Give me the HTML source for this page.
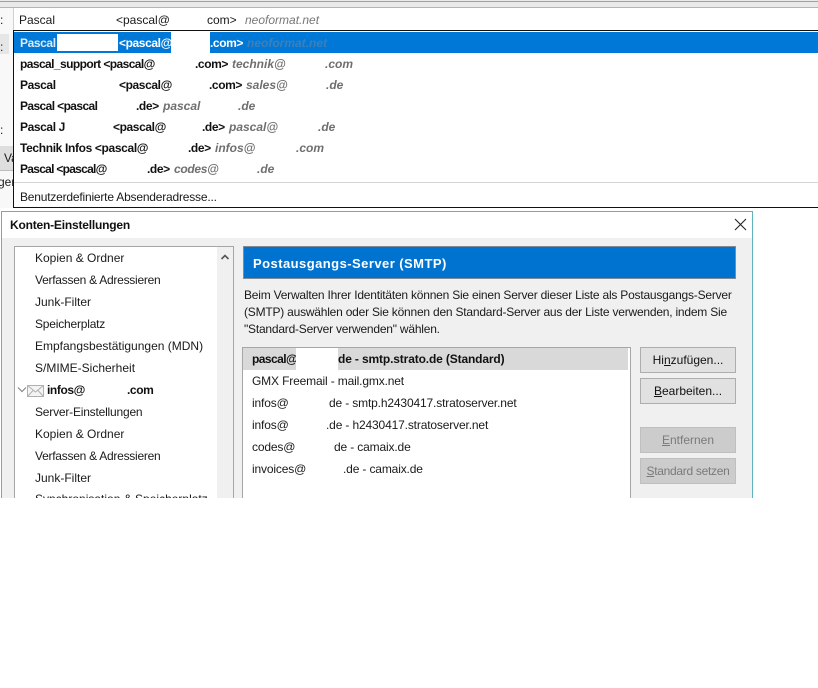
<!DOCTYPE html>
<html>
<head>
<meta charset="utf-8">
<style>
html,body{margin:0;padding:0;background:#fff;}
#p{position:relative;width:818px;height:688px;overflow:hidden;background:#fff;font-family:"Liberation Sans",sans-serif;font-size:12px;color:#1a1a1a;}
#p div,#p span{position:absolute;white-space:nowrap;}
.t{line-height:16px;height:16px;}
.b{font-weight:bold;color:#111;letter-spacing:-.4px;}
.g{font-style:italic;font-weight:bold;color:#6f6f6f;}
.w{color:#fff;font-weight:bold;letter-spacing:-.4px;}
.l{letter-spacing:-.15px;}
.btn{background:#e1e1e1;border:1px solid #adadad;box-sizing:border-box;text-align:center;line-height:24px;color:#111;}
.dis{background:#cccccc;border:1px solid #bfbfbf;color:#7a7a7a;}
u{text-decoration:underline;}
</style>
</head>
<body>
<div id="p">
<!-- top strip -->
<div style="left:0;top:0;width:818px;height:8px;background:#e9e9e9;"></div>
<div style="left:0;top:1px;width:818px;height:1px;background:#a0a0a0;"></div>
<div style="left:0;top:7px;width:818px;height:1px;background:#b4b4b4;"></div>
<div style="left:0;top:8px;width:13px;height:200px;background:#f8f8f8;"></div>
<div style="left:0;top:34px;width:9px;height:20px;background:#e6e6e6;"></div>
<div style="left:0;top:146px;width:13px;height:24px;background:#dedede;"></div>
<div style="left:0;top:170px;width:13px;height:1px;background:#bdbdbd;"></div>
<span class="t" style="left:0;top:12px;">:</span>
<span class="t" style="left:0;top:39px;">:</span>
<span class="t" style="left:0;top:122px;">:</span>
<span class="t" style="left:4px;top:150px;">Va</span>
<span class="t" style="left:-2px;top:174px;">ger</span>
<!-- input -->
<div style="left:13px;top:8px;width:805px;height:22px;background:#fff;"></div>
<div style="left:13px;top:8px;width:1px;height:22px;background:#d0d0d0;"></div>
<span class="t" style="left:19px;top:12px;">Pascal</span>
<span class="t" style="left:116px;top:12px;">&lt;pascal@</span>
<span class="t" style="left:207px;top:12px;">com&gt;</span>
<span class="t" style="left:245px;top:12px;font-style:italic;color:#777;">neoformat.net</span>
<!-- dropdown -->
<div style="left:13px;top:30px;width:805px;height:178px;box-sizing:border-box;border:1px solid #111;border-right:0;background:#fff;"></div>
<div style="left:14px;top:32px;width:804px;height:21px;background:#0078d7;"></div>
<span class="t w" style="left:20px;top:35px;color:#dce9f6;">Pascal</span>
<div style="left:57px;top:34px;width:61px;height:17px;background:#fff;"></div>
<span class="t w" style="left:119px;top:35px;">&lt;pascal@</span>
<div style="left:171px;top:32px;width:39px;height:21px;background:#fff;"></div>
<span class="t w" style="left:210px;top:35px;">.com&gt;</span>
<span class="t g" style="left:247px;top:35px;color:#3f7fb8;">neoformat.net</span>

<span class="t b" style="left:20px;top:56px;letter-spacing:-.58px;">pascal_support &lt;pascal@</span>
<span class="t b" style="left:195px;top:56px;">.com&gt;</span>
<span class="t g" style="left:232px;top:56px;">technik@</span>
<span class="t g" style="left:325px;top:56px;">.com</span>

<span class="t b" style="left:20px;top:77px;">Pascal</span>
<span class="t b" style="left:119px;top:77px;">&lt;pascal@</span>
<span class="t b" style="left:209px;top:77px;">.com&gt;</span>
<span class="t g" style="left:246px;top:77px;">sales@</span>
<span class="t g" style="left:326px;top:77px;">.de</span>

<span class="t b" style="left:20px;top:98px;letter-spacing:-.6px;">Pascal &lt;pascal</span>
<span class="t b" style="left:136px;top:98px;">.de&gt;</span>
<span class="t g" style="left:163px;top:98px;">pascal</span>
<span class="t g" style="left:238px;top:98px;">.de</span>

<span class="t b" style="left:20px;top:119px;">Pascal J</span>
<span class="t b" style="left:113px;top:119px;">&lt;pascal@</span>
<span class="t b" style="left:202px;top:119px;">.de&gt;</span>
<span class="t g" style="left:229px;top:119px;">pascal@</span>
<span class="t g" style="left:318px;top:119px;">.de</span>

<span class="t b" style="left:20px;top:140px;letter-spacing:-.35px;">Technik Infos &lt;pascal@</span>
<span class="t b" style="left:188px;top:140px;">.de&gt;</span>
<span class="t g" style="left:215px;top:140px;">infos@</span>
<span class="t g" style="left:296px;top:140px;">.com</span>

<span class="t b" style="left:20px;top:161px;letter-spacing:-.72px;">Pascal &lt;pascal@</span>
<span class="t b" style="left:147px;top:161px;">.de&gt;</span>
<span class="t g" style="left:174px;top:161px;letter-spacing:-.3px;">codes@</span>
<span class="t g" style="left:257px;top:161px;">.de</span>

<div style="left:14px;top:182px;width:804px;height:1px;background:#d4d4d4;"></div>
<span class="t" style="left:20px;top:189px;letter-spacing:-.2px;">Benutzerdefinierte Absenderadresse...</span>

<!-- dialog -->
<div style="left:1px;top:211px;width:752px;height:287px;box-sizing:border-box;border:1px solid #5fb3bd;border-bottom:0;background:#f0f0f0;"></div>
<div style="left:2px;top:212px;width:750px;height:26px;background:#fff;"></div>
<span class="t b" style="left:10px;top:217px;letter-spacing:-.2px;">Konten-Einstellungen</span>
<svg style="position:absolute;left:734px;top:218px;" width="13" height="13" viewBox="0 0 13 13"><path d="M1 1L12 12M12 1L1 12" stroke="#222" stroke-width="1.1" fill="none"/></svg>

<!-- tree -->
<div style="left:14px;top:246px;width:220px;height:252px;box-sizing:border-box;border:1px solid #a6a6a6;border-bottom:0;background:#fff;"></div>
<div style="left:217px;top:247px;width:16px;height:251px;background:#f0f0f0;"></div>
<svg style="position:absolute;left:220px;top:253px;" width="10" height="8" viewBox="0 0 10 8"><path d="M1.5 6L5 2.5L8.5 6" stroke="#555" stroke-width="1.6" fill="none"/></svg>
<span class="t" style="left:35px;top:250px;">Kopien &amp; Ordner</span>
<span class="t" style="left:35px;top:272px;letter-spacing:-.26px;">Verfassen &amp; Adressieren</span>
<span class="t" style="left:35px;top:294px;">Junk-Filter</span>
<span class="t" style="left:35px;top:316px;letter-spacing:-.2px;">Speicherplatz</span>
<span class="t" style="left:35px;top:338px;">Empfangsbestätigungen (MDN)</span>
<span class="t" style="left:35px;top:360px;">S/MIME-Sicherheit</span>
<svg style="position:absolute;left:17px;top:384px;" width="28" height="13" viewBox="0 0 28 13"><path d="M1 3.5L5 7.5L9 3.5" stroke="#888" stroke-width="1.2" fill="none"/><rect x="10.5" y="1.5" width="16" height="11" fill="#f4f4f4" stroke="#b0b0b0"/><path d="M10.5 1.5L18.5 8L26.500 1.500M10.5 12.500L16 6.500M26.500 12.500L21 6.500" stroke="#b0b0b0" fill="none"/></svg>
<span class="t b" style="left:47px;top:382px;">infos@</span>
<span class="t b" style="left:127px;top:382px;">.com</span>
<span class="t" style="left:35px;top:404px;letter-spacing:-.2px;">Server-Einstellungen</span>
<span class="t" style="left:35px;top:426px;">Kopien &amp; Ordner</span>
<span class="t" style="left:35px;top:448px;letter-spacing:-.26px;">Verfassen &amp; Adressieren</span>
<span class="t" style="left:35px;top:470px;">Junk-Filter</span>
<span class="t" style="left:35px;top:491px;">Synchronisation &amp; Speicherplatz</span>
<div style="left:15px;top:498px;width:220px;height:8px;background:#fff;"></div>

<!-- header -->
<div style="left:243px;top:246px;width:493px;height:33px;box-sizing:border-box;border:1px solid #7f8a94;background:#0073d1;"></div>
<span class="t w" style="left:253px;top:256px;font-size:13px;letter-spacing:.45px;">Postausgangs-Server (SMTP)</span>
<span class="t" style="left:244px;top:287px;letter-spacing:-.215px;">Beim Verwalten Ihrer Identitäten können Sie einen Server dieser Liste als Postausgangs-Server</span>
<span class="t" style="left:244px;top:304px;letter-spacing:-.215px;">(SMTP) auswählen oder Sie können den Standard-Server aus der Liste verwenden, indem Sie</span>
<span class="t" style="left:244px;top:321px;letter-spacing:-.215px;">"Standard-Server verwenden" wählen.</span>

<!-- list -->
<div style="left:242px;top:347px;width:389px;height:151px;box-sizing:border-box;border:1px solid #a6a6a6;border-bottom:0;background:#fff;"></div>
<div style="left:243px;top:348px;width:385px;height:22px;background:#d9d9d9;"></div>
<span class="t b" style="left:252px;top:351px;letter-spacing:-.55px;">pascal@</span>
<div style="left:296px;top:348px;width:42px;height:22px;background:#fff;"></div>
<span class="t b" style="left:338px;top:351px;letter-spacing:-.14px;">de - smtp.strato.de (Standard)</span>
<span class="t l" style="left:252px;top:373px;">GMX Freemail - mail.gmx.net</span>
<span class="t l" style="left:252px;top:395px;">infos@</span>
<span class="t l" style="left:329px;top:395px;">de - smtp.h2430417.stratoserver.net</span>
<span class="t l" style="left:252px;top:417px;">infos@</span>
<span class="t l" style="left:326px;top:417px;">.de - h2430417.stratoserver.net</span>
<span class="t l" style="left:252px;top:439px;">codes@</span>
<span class="t l" style="left:334px;top:439px;">de - camaix.de</span>
<span class="t l" style="left:252px;top:461px;">invoices@</span>
<span class="t l" style="left:343px;top:461px;">.de - camaix.de</span>

<!-- buttons -->
<div class="btn" style="left:640px;top:347px;width:96px;height:26px;">Hi<u>n</u>zufügen...</div>
<div class="btn" style="left:640px;top:378px;width:96px;height:26px;"><u>B</u>earbeiten...</div>
<div class="btn dis" style="left:640px;top:427px;width:96px;height:26px;"><u>E</u>ntfernen</div>
<div class="btn dis" style="left:640px;top:458px;width:96px;height:26px;letter-spacing:-.3px;"><u>S</u>tandard setzen</div>
</div>
</body>
</html>
